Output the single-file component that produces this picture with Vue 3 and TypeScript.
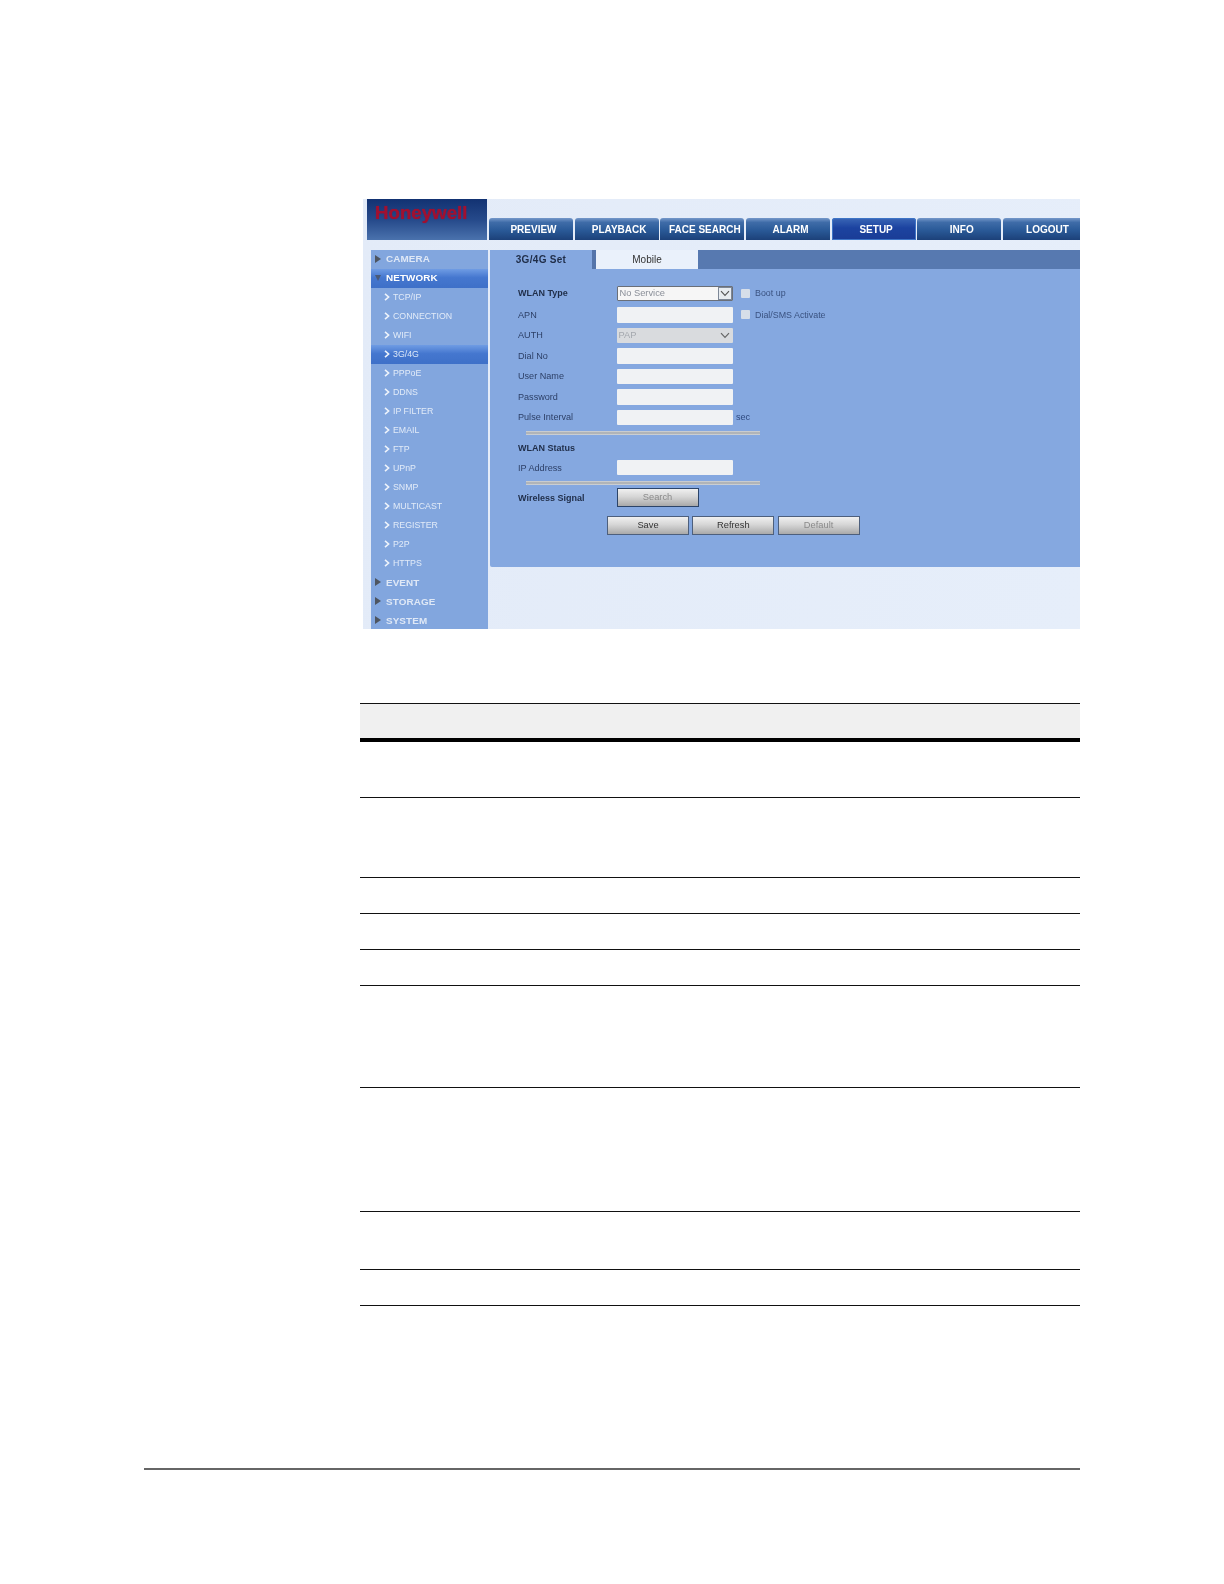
<script setup lang="ts">
const tabs: string[] = ['PREVIEW', 'PLAYBACK', 'FACE SEARCH', 'ALARM', 'SETUP', 'INFO', 'LOGOUT']
const children: string[] = ['TCP/IP', 'CONNECTION', 'WIFI', '3G/4G', 'PPPoE', 'DDNS', 'IP FILTER', 'EMAIL', 'FTP', 'UPnP', 'SNMP', 'MULTICAST', 'REGISTER', 'P2P', 'HTTPS']
const rowHeights: number[] = [56, 80, 36, 36, 36, 102, 124, 58, 36]
</script>

<template>
  <div class="page">
    <div class="shot">
      <header class="top">
        <div class="logo"><span>Honeywell</span></div>
        <nav class="tabs">
          <div v-for="t in tabs" :key="t" class="tab" :class="{ on: t === 'SETUP' }">{{ t }}</div>
        </nav>
      </header>
      <div class="main">
        <aside class="side">
          <div class="group high"><i class="tri"></i>CAMERA</div>
          <div class="group high open"><i class="tri down"></i>NETWORK</div>
          <div v-for="c in children" :key="c" class="child" :class="{ on: c === '3G/4G' }">
            <svg class="chev" width="6" height="8" viewBox="0 0 6 8"><path d="M1 .8 4.6 4 1 7.2" fill="none" stroke="#eef3fb" stroke-width="1.6" /></svg>{{ c }}
          </div>
          <div class="group"><i class="tri"></i>EVENT</div>
          <div class="group"><i class="tri"></i>STORAGE</div>
          <div class="group"><i class="tri"></i>SYSTEM</div>
        </aside>
        <div class="col">
          <section class="panel">
            <div class="subtabs">
              <div class="sub cur">3G/4G Set</div>
              <div class="sub other">Mobile</div>
            </div>
            <div class="form">
              <div class="row first">
                <label class="b">WLAN Type</label>
                <div class="input sel">No Service<span class="arrow"><svg width="10" height="7" viewBox="0 0 10 7"><path d="M1 1.2 5 5.4 9 1.2" fill="none" stroke="#555" stroke-width="1.1" /></svg></span></div>
                <span class="check"></span><span class="note">Boot up</span>
              </div>
              <div class="row">
                <label>APN</label>
                <div class="input"></div>
                <span class="check"></span><span class="note">Dial/SMS Activate</span>
              </div>
              <div class="row">
                <label>AUTH</label>
                <div class="input dis">PAP<svg class="drop" width="10" height="7" viewBox="0 0 10 7"><path d="M1 1.2 5 5.4 9 1.2" fill="none" stroke="#666" stroke-width="1.2" /></svg></div>
              </div>
              <div class="row"><label>Dial No</label><div class="input"></div></div>
              <div class="row"><label>User Name</label><div class="input"></div></div>
              <div class="row"><label>Password</label><div class="input"></div></div>
              <div class="row"><label>Pulse Interval</label><div class="input"></div><span class="unit">sec</span></div>
              <div class="sep"></div>
              <div class="row status"><label class="b">WLAN Status</label></div>
              <div class="row ip"><label>IP Address</label><div class="input"></div></div>
              <div class="sep second"></div>
              <div class="row signal">
                <label class="b">Wireless Signal</label>
                <div class="btn dim dark">Search</div>
              </div>
              <div class="actions">
                <div class="btn">Save</div>
                <div class="btn">Refresh</div>
                <div class="btn dim">Default</div>
              </div>
            </div>
          </section>
        </div>
      </div>
    </div>

    <div class="table">
      <div class="thead"></div>
      <div v-for="(h, i) in rowHeights" :key="i" class="trow" :style="{ height: h + 'px' }"></div>
    </div>

    <div class="foot"></div>
  </div>
</template>

<style scoped>
.page {
  width: 1224px;
  height: 1584px;
  box-sizing: border-box;
  padding-top: 199px;
  background: #fff;
  font-family: "Liberation Sans", Arial, sans-serif;
  overflow: hidden;
}
.shot {
  width: 717px;
  height: 430px;
  margin-left: 363px;
  background: linear-gradient(100deg, #e3ebf8, #e6eefa);
  overflow: hidden;
  filter: blur(0.5px);
}
.top {
  display: flex;
  height: 51px;
  padding-left: 4px;
  box-sizing: border-box;
}
.logo {
  flex: none;
  width: 120px;
  height: 41px;
  background: linear-gradient(#123272, #25498a 50%, #4a72ad);
  box-sizing: border-box;
  padding: 4px 0 0 8px;
}
.logo span {
  color: #a01030;
  font-size: 18.7px;
  font-weight: bold;
  line-height: 20px;
  text-shadow: 0 0 1px #a01030;
}
.tabs {
  flex: none;
  display: flex;
  gap: 1.67px;
  margin-left: 2px;
  margin-top: 19px;
  height: 22px;
}
.tab {
  flex: 0 0 84px;
  box-sizing: border-box;
  height: 22px;
  padding-left: 5px;
  border-radius: 3px 3px 0 0;
  background: linear-gradient(#7598ca, #3f6ca8 20%, #2a5a98 55%, #1c4179);
  color: #fff;
  font-size: 10px;
  font-weight: bold;
  line-height: 23px;
  text-align: center;
  white-space: nowrap;
}
.tab.on {
  background: linear-gradient(#3a66b6, #1c43a0 45%, #1a3c96);
  box-shadow: inset 0 0 0 1px #3d74c6;
}
.main {
  display: flex;
  gap: 2px;
  padding-left: 8px;
}
.side {
  flex: 0 0 117px;
  height: 380px;
  background: #82a6de;
  margin-top: -.5px;
}
.group {
  display: flex;
  align-items: center;
  box-sizing: border-box;
  height: 19px;
  padding-left: 15px;
  position: relative;
  color: #dfe8f6;
  font-size: 9.9px;
  font-weight: bold;
  letter-spacing: 0.1px;
}
.group.high {
  padding-bottom: 1.5px;
}
.group.open {
  color: #fff;
  background: linear-gradient(#6f9ce4, #4577cf 45%, #3e70c8);
}
.tri {
  position: absolute;
  left: 4px;
  top: 5px;
  border-left: 6px solid #4e5560;
  border-top: 4.5px solid transparent;
  border-bottom: 4.5px solid transparent;
}
.tri.down {
  top: 6px;
  border-top: 6px solid #4a5a78;
  border-left: 3.5px solid transparent;
  border-right: 3.5px solid transparent;
  border-bottom: 0;
}
.child {
  display: flex;
  align-items: center;
  box-sizing: border-box;
  gap: 3px;
  height: 19px;
  padding: 0.5px 0 0 13px;
  color: #e2ebf8;
  font-size: 8.8px;
}
.child.on {
  background: linear-gradient(#6f9ce4, #4577cf 45%, #3e70c8);
  color: #dce8f8;
}
.col {
  flex: 1;
  min-width: 0;
}
.panel {
  height: 317px;
  background: #85a8e0;
  color: #2c3f66;
  border-bottom-left-radius: 2px;
}
.subtabs {
  display: flex;
  height: 19px;
  background: #5779b0;
}
.sub {
  display: flex;
  align-items: center;
  justify-content: center;
}
.cur {
  width: 102px;
  background: #85a8e0;
  border-right: 4px solid #5474aa;
  color: #1f2d48;
  font-size: 10px;
  font-weight: bold;
  letter-spacing: 0.3px;
}
.other {
  width: 102px;
  background: #eaf1fb;
  color: #333;
  font-size: 10px;
}
.form {
  padding: 13px 0 0 28px;
  font-size: 9.1px;
}
.row {
  display: flex;
  align-items: center;
  height: 20.5px;
}
.row.first {
  height: 22.5px;
}
.row.status {
  height: 20px;
  margin-top: 2.5px;
}
.row.ip {
  height: 20px;
}
.row.signal {
  height: 19px;
  margin-top: 3.5px;
}
label {
  flex: 0 0 98.5px;
  white-space: nowrap;
}
label.b {
  font-weight: bold;
  color: #1f2d48;
  font-size: 9px;
}
.input {
  position: relative;
  box-sizing: border-box;
  width: 116.5px;
  height: 15.5px;
  padding-left: 2px;
  background: #f0f2f4;
  border-radius: 1px;
  color: #8a8f98;
  font-size: 9.3px;
  line-height: 15.5px;
}
.input.sel {
  background: #f6f6f6;
  border: 1px solid #6a6f78;
  line-height: 13.5px;
}
.arrow {
  position: absolute;
  right: 0;
  top: 0;
  bottom: 0;
  width: 14px;
  display: flex;
  align-items: center;
  justify-content: center;
  background: #e8ecf0;
  border: 1px solid #7d8796;
  box-sizing: border-box;
}
.input.dis {
  background: #d9dbde;
  color: #a4a8ae;
}
.drop {
  position: absolute;
  right: 3px;
  top: 4px;
}
.check {
  width: 9px;
  height: 9px;
  margin-left: 8px;
  background: #d6dee9;
  border-radius: 1px;
}
.note {
  margin-left: 5px;
  color: #3a5280;
  font-size: 8.9px;
}
.unit {
  margin-left: 3px;
  color: #2f4a80;
}
.sep {
  width: 234px;
  height: 4px;
  margin: 3.5px 0 0 8px;
  background: linear-gradient(#d6d8da, #a4a8ac 50%, #d6dade);
}
.sep.second {
  margin-top: 3px;
}
.btn {
  box-sizing: border-box;
  width: 82px;
  height: 19px;
  border: 1px solid #4d5f7c;
  background: linear-gradient(#f0f0f0, #d6d6d6 45%, #a9a9a9);
  color: #333;
  font-size: 9.3px;
  line-height: 17px;
  text-align: center;
}
.btn.dim {
  color: #8a8a8a;
}
.btn.dark {
  border-color: #2c4468;
}
.actions {
  display: flex;
  gap: 3.3px;
  margin: 8.5px 0 0 89px;
}
.table {
  width: 720px;
  margin: 74px 0 0 360px;
}
.thead {
  height: 34px;
  border-top: 1px solid #111;
  border-bottom: 4px solid #000;
  background: #f0f0f0;
}
.trow {
  box-sizing: border-box;
  border-bottom: 1px solid #111;
}
.foot {
  width: 936px;
  height: 1.5px;
  margin: 162px 0 0 144px;
  background: #666;
}
</style>
